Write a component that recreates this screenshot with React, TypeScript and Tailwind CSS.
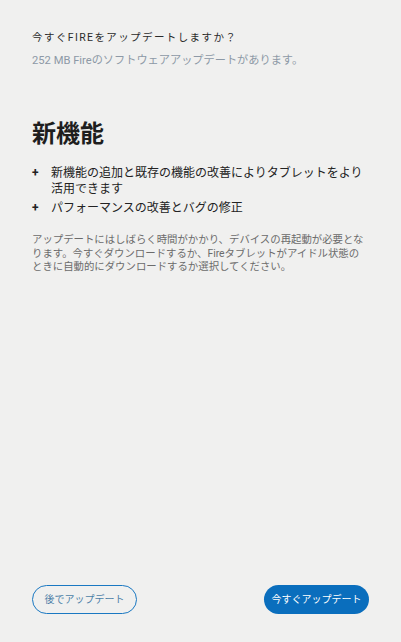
export default function App() {
  return (
    <div
      className="w-[401px] h-[642px] bg-[#f0f0ef] flex flex-col px-[32px] text-[#222]"
      style={{ fontFamily: 'Roboto, "Noto Sans CJK JP", sans-serif' }}
    >
      <div className="pt-[30px] text-[10.5px] leading-[16px] tracking-[1.4px] text-[#2a2a2a]">
        今すぐFIREをアップデートしますか？
      </div>
      <div className="mt-[7px] text-[11.2px] leading-[16px] text-[#8d99a6]">
        252 MB Fireのソフトウェアアップデートがあります。
      </div>
      <h1 className="mt-[50px] text-[24px] leading-[30px] font-bold text-[#1e1e1e]">新機能</h1>
      <ul className="mt-[16px] text-[12px] leading-[16px] text-[#222]">
        <li className="flex">
          <span className="w-[19px] shrink-0 font-bold">+</span>
          <span>新機能の追加と既存の機能の改善によりタブレットをより活用できます</span>
        </li>
        <li className="flex mt-[3px]">
          <span className="w-[19px] shrink-0 font-bold">+</span>
          <span>パフォーマンスの改善とバグの修正</span>
        </li>
      </ul>
      <p className="mt-[17px] text-[10.4px] leading-[13.5px] text-[#6b6b6b]">
        アップデートにはしばらく時間がかかり、デバイスの再起動が必要となります。今すぐダウンロードするか、Fireタブレットがアイドル状態のときに自動的にダウンロードするか選択してください。
      </p>
      <div className="mt-auto mb-[28px] flex justify-between items-center">
        <button className="h-[29px] w-[105px] rounded-full border-[1.5px] border-[#1a78c2] text-[#4c7fa7] text-[10px] flex items-center justify-center">
          後でアップデート
        </button>
        <button className="h-[29px] w-[105px] rounded-full bg-[#0a6ebd] text-white text-[10px] flex items-center justify-center">
          今すぐアップデート
        </button>
      </div>
    </div>
  );
}
